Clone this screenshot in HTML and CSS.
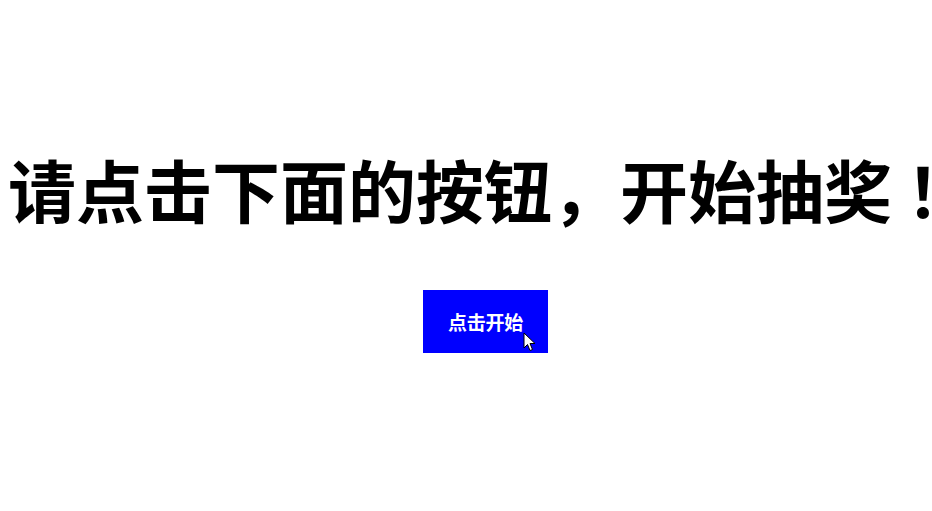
FILE: index.html
```html
<!DOCTYPE html>
<html lang="zh">
<head>
<meta charset="utf-8">
<title>抽奖</title>
<link rel="stylesheet" href="styles.css">
</head>
<body>
<h1 class="title">请点击下面的按钮，开始抽奖<span class="bang">！</span></h1>
<div class="actions">
  <button class="start">点击开始<svg class="cursor" width="13" height="20" viewBox="0 0 13 20"><path d="M1 1 L1 16 L4.5 12.5 L7 18.5 L9.5 17.5 L7 11.5 L12 11.5 Z" fill="#fff" stroke="#000" stroke-width="1" stroke-linejoin="miter"/></svg></button>
</div>
</body>
</html>
```
FILE: styles.css
```css
html, body {
  margin: 0;
  padding: 0;
  background: #fff;
  overflow: hidden;
}
body {
  font-family: "Noto Sans CJK SC", "Noto Sans", sans-serif;
  padding: 0 8px;
}
.title {
  margin: 0;
  padding-top: 148px;
  font-size: 68px;
  line-height: 82px;
  font-weight: 700;
  white-space: nowrap;
  color: #000;
}
.bang {
  font-family: "Noto Sans CJK JP", sans-serif;
  margin-left: 14px;
}
.actions {
  display: flex;
  padding-left: 415px;
  margin-top: 60px;
}
.start {
  position: relative;
  width: 125px;
  height: 63px;
  border: none;
  background: #0000ff;
  color: #fff;
  font-family: "Noto Sans CJK SC", sans-serif;
  font-weight: 700;
  font-size: 19px;
  padding: 0;
  letter-spacing: -0.3px;
}
.cursor {
  position: absolute;
  left: 100px;
  top: 42px;
}
```
